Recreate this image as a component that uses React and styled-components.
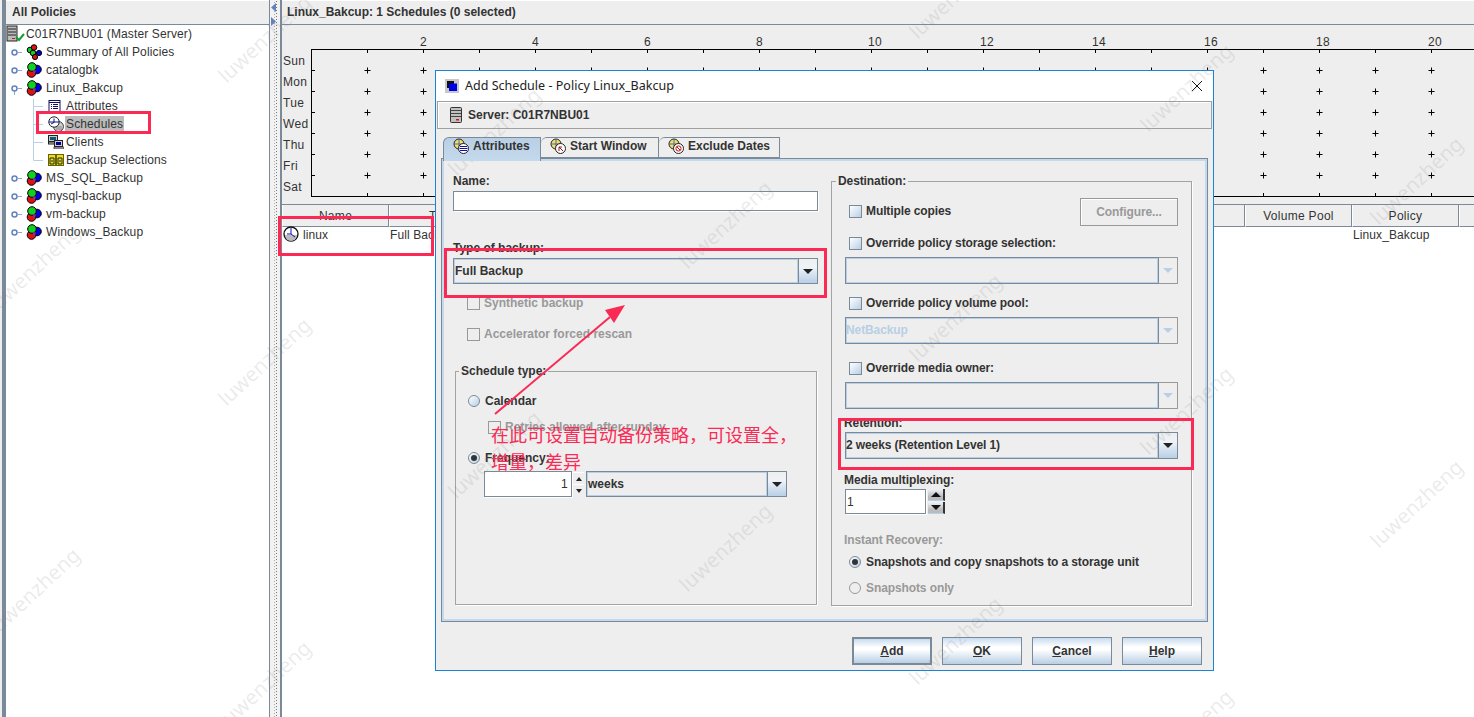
import React from "react";
import styled, { createGlobalStyle } from "styled-components";

const GlobalStyle = createGlobalStyle`
  html, body { margin: 0; padding: 0; background: #fff; }
  body { font-family: "Liberation Sans", Arial, sans-serif; font-size: 12px; color: #333; }
  * { box-sizing: border-box; }
`;

const Page = styled.div`
  position: relative; width: 1474px; height: 717px; overflow: hidden; display: flex; background: #fff;
`;

/* ---------- left tree pane ---------- */
const Strip = styled.div`width: 6px; background: #eee; border-right: 4px solid #7a8a99;`;
const LeftPane = styled.aside`
  width: 264px; display: flex; flex-direction: column; border-right: 1px solid #7a8a99; background: #fff;
`;
const PaneHeader = styled.header`
  height: 25px; flex: none; background: #eee; border-bottom: 1px solid #7a8a99; border-top: 1px solid #fff;
  display: flex; align-items: center; font-weight: bold; color: #333; padding: 0 0 2px ${(p) => p.$pad}px;
`;
const Tree = styled.ul`list-style: none; margin: 0; padding: 0; letter-spacing: 0.13px;`;
const TreeRow = styled.li`height: 18px; display: flex; align-items: center; white-space: nowrap;`;
const TreeLabel = styled.span`
  margin-left: ${(p) => p.$gap}px; padding: 0 1px; line-height: 16px; color: #333;
  background: ${(p) => (p.$selected ? "#bbbbbb" : "transparent")};
`;
const Splitter = styled.div`
  width: 10px; flex: none; background-color: #f2f2f2;
  background-image: radial-gradient(circle, #777 0.6px, transparent 0.8px), radial-gradient(circle, #aaa 0.6px, transparent 0.8px);
  background-size: 3px 3px, 3px 3px; background-repeat: repeat-y, repeat-y; background-position: 5px 0, 3px 1px;
  display: flex; flex-direction: column; align-items: center; padding: 3px 3px 0 0; gap: 5px;
`;

/* ---------- right pane ---------- */
const RightPane = styled.main`flex: 1; min-width: 0; display: flex; flex-direction: column; border-left: 2px solid #7a8a99;`;
const ChartArea = styled.section`height: 179px; flex: none; background: #eee;`;
const ColumnGrid = styled.div`display: grid; grid-template-columns: repeat(12, 107px);`;
const HeadRow = styled(ColumnGrid)`height: 23px; background: #eee; flex: none; border-top: 1px solid #7a8a99;`;
const HeadCell = styled.div`
  border-right: 1px solid #7a8a99; border-bottom: 1px solid #7a8a99; border-left: 1px solid #fff;
  display: flex; align-items: center; justify-content: center; color: #333; letter-spacing: 0.3px; overflow: hidden;
`;
const BodyRow = styled(ColumnGrid)`height: 15px;`;
const BodyCell = styled.div`
  display: flex; align-items: center; gap: 4px; padding-left: 1px; white-space: nowrap; letter-spacing: 0.1px; overflow: visible; min-width: 0;
`;

/* ---------- dialog ---------- */
const Dialog = styled.div`
  position: absolute; left: 435px; top: 70px; width: 779px; height: 601px;
  border: 1px solid #1a83d6; background: #eee; display: flex; flex-direction: column;
`;
const TitleBar = styled.div`
  height: 30px; flex: none; background: #fff; display: flex; align-items: center; padding: 0 9px 1px;
  font-family: "Noto Sans", "Open Sans", sans-serif; font-size: 12.5px; color: #222; letter-spacing: 0.02px;
`;
const TitleText = styled.span`margin-left: 6px; flex: 1;`;
const ServerBar = styled.div`
  height: 28px; flex: none; margin: 0 1px; border: 1px solid #a0a0a0; display: flex; align-items: center;
  padding-left: 12px; font-weight: bold; color: #333; gap: 6px; box-shadow: inset 1px 1px 0 #fff;
`;
const Tabs = styled.div`display: flex; margin: 8px 0 0 7px; height: 21px; flex: none;`;
const Tab = styled.div`
  position: relative; z-index: 1; height: ${(p) => (p.$active ? 24 : 21)}px; width: ${(p) => p.$w}px;
  border: 1px solid #7a8a99; border-bottom: ${(p) => (p.$active ? "none" : "1px solid #7a8a99")};
  border-left: ${(p) => (p.$first ? "1px solid #7a8a99" : "none")};
  border-top-left-radius: 6px;
  background: ${(p) => (p.$active ? "linear-gradient(#b8cfe5 , #c5d9ec)" : "#eee")};
  display: flex; align-items: flex-start; gap: 4px; padding: 0 0 0 9px; font-weight: bold; color: #333; line-height: 17px;
`;
const Panel = styled.div`
  margin-left: 5px; width: 767px; height: 464px; flex: none; border: 1px solid #7a8a99;
  box-shadow: inset 0 0 0 2px #c5d9ec; padding: 15px 0 0 11px;
  display: grid; grid-template-columns: 378px 361px; align-items: start;
`;
const Col = styled.div`display: flex; flex-direction: column; align-items: flex-start;`;
const Label = styled.div`
  height: 14px; line-height: 14px; font-weight: bold; white-space: nowrap;
  margin-top: ${(p) => p.$mt || 0}px; margin-left: ${(p) => p.$ml || 0}px; color: ${(p) => (p.$off ? "#999" : "#333")};
`;
const TextInput = styled.div`
  height: ${(p) => p.$h}px; width: ${(p) => p.$w}px; margin-top: ${(p) => p.$mt || 0}px; background: #fff;
  border: 1px solid #7a8a99; box-shadow: 1px 1px 0 #fff; flex: none;
  display: flex; align-items: center; padding: 0 3px 0 1px; letter-spacing: 0.3px;
  justify-content: ${(p) => (p.$right ? "flex-end" : "flex-start")};
`;
const Combo = styled.div`
  display: flex; flex: none; height: ${(p) => p.$h || 27}px; width: ${(p) => p.$w}px;
  margin-top: ${(p) => p.$mt || 0}px; margin-left: ${(p) => p.$ml || 0}px;
`;
const ComboField = styled.div`
  flex: 1; border: 1px solid #7a8a99; box-shadow: inset 0 0 0 1px #b8cfe5; display: flex; align-items: center;
  padding: 0 0 ${(p) => (p.$raised ? 2 : 0)}px ${(p) => (p.$raised ? 0 : 1)}px;
  font-weight: bold; color: ${(p) => (p.$off ? "#b8cfe5" : "#333")}; background: #eee;
`;
const ComboArrow = styled.div`
  width: 19px; flex: none; display: flex; align-items: center; justify-content: center;
  border: 1px solid ${(p) => (p.$off ? "#999" : "#7a8a99")}; border-left: none;
  background: ${(p) => (p.$off ? "#eee" : "linear-gradient(#eee, #eef3f8 35%, #b8cfe5)")};
  &::after {
    content: ""; border-style: solid; border-width: 5px 5px 0; border-color: ${(p) => (p.$off ? "#b8cfe5" : "#222")} transparent transparent;
  }
`;
const CheckRow = styled.div`
  display: flex; align-items: center; gap: 4px; height: ${(p) => p.$h || 14}px; flex: none;
  margin-top: ${(p) => p.$mt || 0}px; margin-left: ${(p) => p.$ml || 0}px; margin-bottom: ${(p) => p.$mb || 0}px;
  font-weight: bold; white-space: nowrap;
  color: ${(p) => (p.$off ? "#999" : "#333")};
`;
const Box = styled.span`
  width: 13px; height: 13px; flex: none; border: 1px solid ${(p) => (p.$off ? "#999" : "#7a8a99")};
  background: ${(p) => (p.$off ? "#eee" : "linear-gradient(135deg, #fff, #b8cfe5)")};
`;
const Radio = styled.span`
  width: 12px; height: 12px; flex: none; margin-right: 1px; border-radius: 50%; border: 1px solid ${(p) => (p.$off ? "#999" : "#7a8a99")};
  background: ${(p) => (p.$off ? "#eee" : "linear-gradient(135deg, #fff, #b8cfe5)")};
  display: flex; align-items: center; justify-content: center;
  &::after { content: ""; width: 6px; height: 6px; border-radius: 50%; background: ${(p) => (p.$on ? "#333" : "transparent")}; }
`;
const GroupBox = styled.fieldset`
  margin: 0 0 0 ${(p) => p.$ml || 0}px; padding: 0 13px 0 ${(p) => p.$pl || 13}px; border: 1px solid #a3a3a3;
  width: ${(p) => p.$w}px; height: ${(p) => p.$h}px; margin-top: ${(p) => p.$mt || 0}px; min-width: 0;
  display: flex; flex-direction: column; align-items: flex-start; box-shadow: 1px 1px 0 #fff;
  letter-spacing: ${(p) => p.$track || 0}px;
`;
const Legend = styled.legend`
  padding: 0 2px; margin-left: -9px; height: 14px; line-height: 14px; font-weight: bold; color: #333;
`;
const SpaceRow = styled.div`
  display: flex; align-items: center; justify-content: space-between; align-self: stretch; margin-top: ${(p) => p.$mt || 0}px; height: 28px;
`;
const FlatButton = styled.div`
  width: 98px; height: 28px; border: 1px solid #999; display: flex; align-items: center; justify-content: center;
  font-weight: bold; color: #999; box-shadow: inset 1px 1px 0 #fff;
`;
const InlineRow = styled.div`
  display: flex; align-items: stretch; margin-top: ${(p) => p.$mt || 0}px; margin-left: ${(p) => p.$ml || 0}px; gap: ${(p) => p.$gap || 0}px;
`;
const SpinStack = styled.div`display: flex; flex-direction: column; gap: ${(p) => p.$gap || 0}px; justify-content: center;`;
const SpinFlat = styled.div`
  width: 11px; height: 12px; background: #eee; border-top: 1px solid #fff; display: flex; align-items: center; justify-content: center;
  &::after { content: ""; border-style: solid; border-color: #222 transparent;
    border-width: ${(p) => (p.$up ? "0 3px 4px" : "4px 3px 0")}; }
`;
const SpinSolid = styled.div`
  width: 17px; height: 12px; background: linear-gradient(#eef3f8, #bbb 70%); border-right: 2px solid #333; border-bottom: 1px solid #b8cfe5;
  display: flex; align-items: center; justify-content: center;
  &::after { content: ""; border-style: solid; border-color: #111 transparent;
    border-width: ${(p) => (p.$up ? "0 5px 5px" : "5px 5px 0")}; }
`;
const Footer = styled.div`display: flex; justify-content: flex-end; gap: 10px; padding: 15px 11px 0 0;`;
const PushButton = styled.div`
  width: 80px; height: 28px; border: ${(p) => (p.$def ? 2 : 1)}px solid #7a8a99;
  background: linear-gradient(#c8dcf0, #fff 35%, #fff 45%, #b8cfe5);
  display: flex; align-items: center; justify-content: center; font-weight: bold; color: #333;
  u { text-underline-offset: 1px; }
`;

/* ---------- annotations ---------- */
const RedBox = styled.div`
  position: absolute; left: ${(p) => p.$x}px; top: ${(p) => p.$y}px; width: ${(p) => p.$w}px; height: ${(p) => p.$h}px;
  border: 3px solid #fb2a55; pointer-events: none;
`;
const Overlay = styled.svg`position: absolute; left: 0; top: 0; pointer-events: none;`;
const Note = styled.div`
  position: absolute; left: 491px; top: 421px; width: 310px; font-family: "Noto Sans CJK SC", sans-serif; font-size: 18px;
  line-height: 27px; color: #fb2a55;
`;
const Watermark = styled.div`
  position: absolute; left: ${(p) => p.$x}px; top: ${(p) => p.$y}px; transform: translate(-50%, -50%) rotate(-43deg);
  font-family: "Noto Sans", sans-serif; font-size: 20.5px; color: rgba(130, 130, 130, 0.17); white-space: nowrap; pointer-events: none;
`;

/* ---------- icons ---------- */
const Guide = ({ kind }) => {
  if (kind === "open" || kind === "closed")
    return (
      <svg width="20" height="18" style={{ flex: "none" }}>
        <line x1="12" y1="9.5" x2="16" y2="9.5" stroke="#8fa8c4" />
        {kind === "open" && <line x1="8.5" y1="12" x2="8.5" y2="16" stroke="#8fa8c4" />}
        <circle cx="8.5" cy="9.5" r="2.5" fill="#fff" stroke="#6382bf" strokeWidth="1.5" />
      </svg>
    );
  return (
    <svg width="42" height="18" style={{ flex: "none" }}>
      <line x1="27.5" y1={kind === "first" ? 2 : 0} x2="27.5" y2={kind === "last" ? 9.5 : 18} stroke="#b8cfe5" />
      <line x1="27.5" y1="9.5" x2="37" y2="9.5" stroke="#b8cfe5" />
    </svg>
  );
};
const PolicyIcon = () => (
  <svg width="16" height="16" viewBox="0 0 16 16" style={{ flex: "none" }}>
    <circle cx="11" cy="7.5" r="4.3" fill="#0000e0" stroke="#000" />
    <circle cx="5.5" cy="11" r="4.3" fill="#e01010" stroke="#000" />
    <circle cx="6" cy="5" r="4.3" fill="#10d020" stroke="#000" />
    <path d="M7 8 l3 .5 -1 3.5 -2 -1z" fill="#8030a0" />
  </svg>
);
const SummaryIcon = () => (
  <svg width="16" height="16" viewBox="0 0 16 16" style={{ flex: "none" }}>
    <circle cx="4" cy="6" r="2.8" fill="#10d020" stroke="#000" />
    <circle cx="8" cy="3.5" r="2.8" fill="#e01010" stroke="#000" />
    <circle cx="7" cy="9" r="2.8" fill="#10d020" stroke="#000" />
    <circle cx="13" cy="9" r="2.6" fill="#0000e0" stroke="#000" />
    <circle cx="9" cy="13" r="2.6" fill="#e01010" stroke="#000" />
  </svg>
);
const ServerCheck = () => (
  <svg width="20" height="18" viewBox="0 0 20 18" style={{ flex: "none" }}>
    <rect x="1" y="1" width="10" height="15" fill="#bbb" stroke="#222" />
    <path d="M2 4h8M2 7h8M2 10h8" stroke="#222" />
    <rect x="6" y="13" width="3" height="1" fill="#e01010" />
    <path d="M10 12l3 3 5-6" stroke="#10a030" strokeWidth="2" fill="none" />
  </svg>
);
const ServerIcon = () => (
  <svg width="12" height="16" viewBox="0 0 12 16" style={{ flex: "none" }}>
    <rect x="0.5" y="0.5" width="11" height="15" rx="1" fill="#c0c0c0" stroke="#333" />
    <path d="M1 3.5h10M1 6.5h10M1 9.5h10" stroke="#444" />
    <rect x="6" y="12" width="3" height="1.5" fill="#e01010" />
  </svg>
);
const AttrIcon = () => (
  <svg width="13" height="12" viewBox="0 0 13 12" style={{ flex: "none" }}>
    <rect x="1" y="0.5" width="11" height="11" fill="#fff" stroke="#101060" />
    <path d="M1 2.5h11" stroke="#101060" />
    <path d="M3 4.5h1M3 6.5h1M3 8.5h1M5 4.5h5M5 6.5h5M5 8.5h5" stroke="#101060" />
  </svg>
);
const ScheduleIcon = () => (
  <svg width="16" height="16" viewBox="0 0 16 16" style={{ flex: "none" }}>
    <circle cx="10.5" cy="10.5" r="5" fill="#ccc" stroke="#444" />
    <path d="M7 11h7M8 13h6" stroke="#888" />
    <circle cx="6" cy="6" r="5.2" fill="#fff" stroke="#222" />
    <path d="M6 2.5V6.5M6 6.5L3 8M1 6h10" stroke="#101090" />
  </svg>
);
const ClientsIcon = () => (
  <svg width="16" height="14" viewBox="0 0 16 14" style={{ flex: "none" }}>
    <rect x="0.5" y="0.5" width="9" height="6" fill="#ccc" stroke="#222" />
    <rect x="2" y="2" width="6" height="3" fill="#006070" />
    <rect x="0.5" y="7" width="6" height="2" fill="#ccc" stroke="#222" />
    <rect x="6.5" y="5.5" width="8" height="6" fill="#ccc" stroke="#222" />
    <rect x="8" y="7" width="5" height="3" fill="#0000a0" />
    <rect x="6" y="12" width="10" height="2" fill="#bbb" stroke="#222" strokeWidth="0.7" />
  </svg>
);
const SelectionsIcon = () => (
  <svg width="16" height="12" viewBox="0 0 16 12" style={{ flex: "none" }}>
    <rect x="0.5" y="0.5" width="7" height="11" fill="#e8e020" stroke="#6a6400" />
    <rect x="8.5" y="0.5" width="7" height="11" fill="#e8e020" stroke="#6a6400" />
    <path d="M2 4h4v6H2zM3 7h2M10 4h4v6h-4zM11 7h2" fill="none" stroke="#222" />
  </svg>
);
const ClockIcon = () => (
  <svg width="16" height="16" viewBox="0 0 16 16" style={{ flex: "none", marginTop: -1 }}>
    <circle cx="8" cy="8" r="7" fill="#fff" stroke="#111" strokeWidth="1.3" />
    <path d="M2 9 A6 6 0 0 0 14 9 Z" fill="#bbb" />
    <path d="M8 2v6M8 8H4M8 8l4 3" stroke="#1010b0" />
  </svg>
);
const TabIcon = ({ variant }) => (
  <svg width="16" height="16" viewBox="0 0 16 16" style={{ flex: "none" }}>
    <circle cx="6" cy="6" r="5" fill="#f0e060" stroke="#222" />
    <path d="M6 1v10M1 6h10" stroke="#5060c0" />
    <circle cx="10.5" cy="10.5" r="5" fill="#fff" stroke="#222" />
    {variant === "attr" && <path d="M7 8.5h7M6.5 10.5h8M7 12.5h7" stroke="#1010a0" />}
    {variant === "start" && <path d="M9 13V9h3M9 9l4 4" stroke="#a01010" fill="none" />}
    {variant === "excl" && <><circle cx="10.5" cy="10.5" r="2.6" fill="none" stroke="#c01010" /><path d="M9 9l3 3" stroke="#c01010" /></>}
  </svg>
);
const DialogGlyph = () => (
  <svg width="14" height="14" viewBox="0 0 14 14" style={{ flex: "none" }}>
    <rect width="14" height="14" fill="#c8c8c8" />
    <rect x="2" y="2" width="7" height="7" fill="#111" />
    <rect x="4" y="4.5" width="8" height="7.5" fill="#0000e8" />
  </svg>
);
const CloseGlyph = () => (
  <svg width="12" height="12" viewBox="0 0 12 12" style={{ flex: "none", marginRight: 1 }}>
    <path d="M1 1l10 10M11 1L1 11" stroke="#111" strokeWidth="1" />
  </svg>
);
const SplitArrow = ({ dir }) => (
  <svg width="6" height="9" viewBox="0 0 6 9">
    <path d={dir === "l" ? "M5 0v9L0 4.5z" : "M0 0v9l5-4.5z"} fill="#6382bf" />
  </svg>
);

/* ---------- chart ---------- */
const days = ["Sun", "Mon", "Tue", "Wed", "Thu", "Fri", "Sat"];
const Chart = () => {
  const cols = Array.from({ length: 20 }, (_, i) => i + 1);
  const rows = [45.5, 66.5, 87.5, 108.5, 129.5, 150.5];
  const x0 = 29;
  const tx = (c) => x0 + 56 * c + 0.5;
  return (
    <svg width="1192" height="179" style={{ display: "block" }} fontFamily="Liberation Sans, Arial, sans-serif" fontSize="12" fill="#333">
      <line x1={x0} y1="24.5" x2="1192" y2="24.5" stroke="#000" />
      <line x1={x0} y1="171.5" x2="1192" y2="171.5" stroke="#000" />
      <line x1={x0 + 0.5} y1="24" x2={x0 + 0.5} y2="172" stroke="#000" />
      {cols.map((c) => (
        <g key={c} stroke="#000">
          <line x1={tx(c)} y1="24" x2={tx(c)} y2="28" />
          <line x1={tx(c)} y1="168" x2={tx(c)} y2="172" />
        </g>
      ))}
      {rows.map((y) => (
        <line key={y} x1={x0} y1={y} x2={x0 + 4} y2={y} stroke="#000" />
      ))}
      {cols.map((c) =>
        rows.map((y) => (
          <path key={`${c}-${y}`} d={`M${tx(c) - 3} ${y}h6M${tx(c)} ${y - 3}v6`} stroke="#000" fill="none" />
        ))
      )}
      {cols.filter((c) => c % 2 === 0).map((c) => (
        <text key={c} x={tx(c) - 3.5} y="21" letterSpacing="0.3">{c}</text>
      ))}
      {days.map((d, i) => (
        <text key={d} x="1" y={39.5 + i * 21} letterSpacing="0.3">{d}</text>
      ))}
    </svg>
  );
};

/* the watermark is a regular lattice over the whole picture */
const marks = [];
for (let k = 0; k < 7; k++) {
  for (let n = -1; n < 4; n++) {
    const x = 33 + 230.5 * k;
    const y = ((591 + 93 * k) % 323) + 323 * n;
    if (y > -70 && y < 790) marks.push([x, y]);
  }
}

export default function App() {
  const heads = ["Name", "Type", "", "", "", "", "", "", "", "Volume Pool", "Policy", ""];
  return (
    <Page>
      <GlobalStyle />
      <Strip />
      <LeftPane>
        <PaneHeader $pad={6}>All Policies</PaneHeader>
        <Tree>
          <TreeRow><ServerCheck /><TreeLabel $gap={-1}>C01R7NBU01 (Master Server)</TreeLabel></TreeRow>
          <TreeRow><Guide kind="closed" /><SummaryIcon /><TreeLabel $gap={3}>Summary of All Policies</TreeLabel></TreeRow>
          <TreeRow><Guide kind="closed" /><PolicyIcon /><TreeLabel $gap={3}>catalogbk</TreeLabel></TreeRow>
          <TreeRow><Guide kind="open" /><PolicyIcon /><TreeLabel $gap={3}>Linux_Bakcup</TreeLabel></TreeRow>
          <TreeRow><Guide kind="first" /><AttrIcon /><TreeLabel $gap={4}>Attributes</TreeLabel></TreeRow>
          <TreeRow><Guide kind="mid" /><ScheduleIcon /><TreeLabel $gap={1} $selected>Schedules</TreeLabel></TreeRow>
          <TreeRow><Guide kind="mid" /><ClientsIcon /><TreeLabel $gap={1}>Clients</TreeLabel></TreeRow>
          <TreeRow><Guide kind="last" /><SelectionsIcon /><TreeLabel $gap={1}>Backup Selections</TreeLabel></TreeRow>
          <TreeRow><Guide kind="closed" /><PolicyIcon /><TreeLabel $gap={3}>MS_SQL_Backup</TreeLabel></TreeRow>
          <TreeRow><Guide kind="closed" /><PolicyIcon /><TreeLabel $gap={3}>mysql-backup</TreeLabel></TreeRow>
          <TreeRow><Guide kind="closed" /><PolicyIcon /><TreeLabel $gap={3}>vm-backup</TreeLabel></TreeRow>
          <TreeRow><Guide kind="closed" /><PolicyIcon /><TreeLabel $gap={3}>Windows_Backup</TreeLabel></TreeRow>
        </Tree>
      </LeftPane>
      <Splitter><SplitArrow dir="l" /><SplitArrow dir="r" /></Splitter>
      <RightPane>
        <PaneHeader $pad={5}>Linux_Bakcup: 1 Schedules (0 selected)</PaneHeader>
        <ChartArea><Chart /></ChartArea>
        <HeadRow>{heads.map((h, i) => <HeadCell key={i}>{h}</HeadCell>)}</HeadRow>
        <BodyRow>
          <BodyCell><ClockIcon />linux</BodyCell>
          <BodyCell>Full Backup</BodyCell>
          {Array.from({ length: 8 }, (_, i) => <BodyCell key={i} />)}
          <BodyCell>Linux_Bakcup</BodyCell>
        </BodyRow>
      </RightPane>

      <Dialog>
        <TitleBar><DialogGlyph /><TitleText>Add Schedule - Policy Linux_Bakcup</TitleText><CloseGlyph /></TitleBar>
        <ServerBar><ServerIcon />Server: C01R7NBU01</ServerBar>
        <Tabs>
          <Tab $w={98} $active $first><TabIcon variant="attr" />Attributes</Tab>
          <Tab $w={118}><TabIcon variant="start" />Start Window</Tab>
          <Tab $w={121}><TabIcon variant="excl" />Exclude Dates</Tab>
        </Tabs>
        <Panel>
          <Col>
            <Label>Name:</Label>
            <TextInput $mt={3} $w={365} $h={20} />
            <Label $mt={30}>Type of backup:</Label>
            <Combo $mt={3} $w={365} $h={26}><ComboField>Full Backup</ComboField><ComboArrow /></Combo>
            <CheckRow $mt={12} $ml={14} $off><Box $off />Synthetic backup</CheckRow>
            <CheckRow $mt={17} $ml={14} $off><Box $off />Accelerator forced rescan</CheckRow>
            <GroupBox $ml={2} $mt={23} $w={362} $h={241} $pl={12}>
              <Legend>Schedule type:</Legend>
              <CheckRow $mt={16}><Radio />Calendar</CheckRow>
              <CheckRow $mt={12} $ml={20} $off><Box $off />Retries allowed after runday</CheckRow>
              <CheckRow $mt={17}><Radio $on />Frequency:</CheckRow>
              <InlineRow $mt={6} $ml={16} $gap={1}>
                <TextInput $w={88} $h={26} $right>1</TextInput>
                <SpinStack><SpinFlat $up /><SpinFlat /></SpinStack>
                <Combo $w={201} $h={26} $ml={1}><ComboField>weeks</ComboField><ComboArrow /></Combo>
              </InlineRow>
            </GroupBox>
          </Col>
          <Col>
            <GroupBox $w={361} $h={432} $track={-0.1}>
              <Legend>Destination:</Legend>
              <SpaceRow $mt={10}>
                <CheckRow $ml={4} $mb={2}><Box />Multiple copies</CheckRow>
                <FlatButton>Configure...</FlatButton>
              </SpaceRow>
              <CheckRow $mt={10} $ml={4}><Box />Override policy storage selection:</CheckRow>
              <Combo $mt={7} $w={333}><ComboField $off /><ComboArrow $off /></Combo>
              <CheckRow $mt={12} $ml={4}><Box />Override policy volume pool:</CheckRow>
              <Combo $mt={7} $w={333}><ComboField $off $raised>NetBackup</ComboField><ComboArrow $off /></Combo>
              <CheckRow $mt={17} $ml={4}><Box />Override media owner:</CheckRow>
              <Combo $mt={7} $w={333}><ComboField $off /><ComboArrow $off /></Combo>
              <Label $mt={7} $ml={-1}>Retention:</Label>
              <Combo $mt={2} $w={333}><ComboField $raised>2 weeks (Retention Level 1)</ComboField><ComboArrow /></Combo>
              <Label $mt={14} $ml={-1}>Media multiplexing:</Label>
              <InlineRow $mt={2} $gap={2}>
                <TextInput $w={81} $h={25}>1</TextInput>
                <SpinStack $gap={1}><SpinSolid $up /><SpinSolid /></SpinStack>
              </InlineRow>
              <Label $mt={19} $ml={-1} $off>Instant Recovery:</Label>
              <CheckRow $mt={8} $ml={4}><Radio $on />Snapshots and copy snapshots to a storage unit</CheckRow>
              <CheckRow $mt={12} $ml={4} $off><Radio $off />Snapshots only</CheckRow>
            </GroupBox>
          </Col>
        </Panel>
        <Footer>
          <PushButton $def><span><u>A</u>dd</span></PushButton>
          <PushButton><span><u>O</u>K</span></PushButton>
          <PushButton><span><u>C</u>ancel</span></PushButton>
          <PushButton><span><u>H</u>elp</span></PushButton>
        </Footer>
      </Dialog>

      <RedBox $x={36} $y={111} $w={115} $h={23} />
      <RedBox $x={278} $y={216} $w={156} $h={40} />
      <RedBox $x={444} $y={248} $w={383} $h={50} />
      <RedBox $x={838} $y={418} $w={356} $h={52} />
      <Overlay width="1474" height="717">
        <line x1="495" y1="414" x2="610" y2="317" stroke="#fb2a55" strokeWidth="2" />
        <path d="M625 305L605 310L614 323Z" fill="#fb2a55" />
      </Overlay>
      <Note>在此可设置自动备份策略，可设置全，增量，差异</Note>
      {marks.map(([x, y]) => <Watermark key={`${x}-${y}`} $x={x} $y={y}>luwenzheng</Watermark>)}
    </Page>
  );
}
